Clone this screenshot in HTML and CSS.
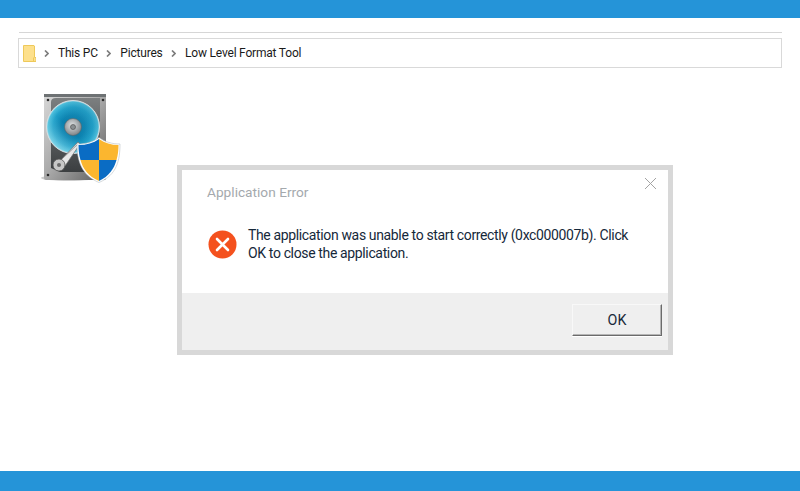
FILE: index.html
```html
<!DOCTYPE html>
<html lang="en">
<head>
<meta charset="utf-8">
<title>Application Error</title>
<link rel="stylesheet" href="styles.css">
</head>
<body>
<div class="page">
  <header class="bar bar-top"></header>
  <main class="explorer">
    <div class="rule"></div>
    <nav class="address">
      <svg class="folder" width="13" height="17" viewBox="0 0 13 17">
        <path d="M.5.5h10.500l.5.5v11.500h1.500v4H.5z" fill="#fde08c" stroke="#eec95a"/>
        <path d="M10.500 12.500v4" stroke="#eec95a"/>
      </svg>
      <svg class="chev" width="5" height="7" viewBox="0 0 5 7"><path d="M1 .5l3 3-3 3" fill="none" stroke="#7d7d7d" stroke-width="1.700"/></svg>
      <span class="crumb">This PC</span>
      <svg class="chev" width="5" height="7" viewBox="0 0 5 7"><path d="M1 .5l3 3-3 3" fill="none" stroke="#7d7d7d" stroke-width="1.700"/></svg>
      <span class="crumb">Pictures</span>
      <svg class="chev" width="5" height="7" viewBox="0 0 5 7"><path d="M1 .5l3 3-3 3" fill="none" stroke="#7d7d7d" stroke-width="1.700"/></svg>
      <span class="crumb">Low Level Format Tool</span>
    </nav>
    <svg class="app-icon" width="80" height="90" viewBox="0 0 80 90">
      <defs>
        <linearGradient id="case" x1="0" y1="0" x2="1" y2="1">
          <stop offset="0" stop-color="#d8d8d8"/><stop offset=".5" stop-color="#a8a8a8"/><stop offset="1" stop-color="#5a5a5a"/>
        </linearGradient>
        <radialGradient id="platter" cx=".5" cy=".5" r=".5">
          <stop offset="0" stop-color="#06709c"/><stop offset=".45" stop-color="#0b82b0"/><stop offset=".75" stop-color="#1f9fc8"/><stop offset=".94" stop-color="#4dbfdc"/><stop offset="1" stop-color="#c3ecf4"/>
        </radialGradient>
        <linearGradient id="sheen" x1="0" y1="1" x2="1" y2="0">
          <stop offset="0" stop-color="#c8f2f8" stop-opacity=".75"/><stop offset=".45" stop-color="#5cc4de" stop-opacity="0"/><stop offset="1" stop-color="#045f88" stop-opacity=".35"/>
        </linearGradient>
        <radialGradient id="hub" cx=".45" cy=".4" r=".7">
          <stop offset="0" stop-color="#dfe2e3"/><stop offset="1" stop-color="#6e7478"/>
        </radialGradient>
        <linearGradient id="bay" x1="0" y1="0" x2="0" y2="1">
          <stop offset="0" stop-color="#7c7f80"/><stop offset="1" stop-color="#3b3e40"/>
        </linearGradient>
      </defs>
      <ellipse cx="28" cy="84" rx="28" ry="3" fill="#000" opacity=".2"/>
      <rect x="3" y="0" width="62" height="86" rx="2" fill="url(#case)"/>
      <rect x="3" y="0" width="62" height="3" fill="#6e7274"/>
      <path d="M10 8q0-4 5-4h44v74H19l-9-4z" fill="url(#bay)"/>
      <circle cx="32" cy="33" r="26.500" fill="url(#platter)" stroke="#d7dde0" stroke-width="1"/>
      <circle cx="32" cy="33" r="26" fill="url(#sheen)"/>
      <circle cx="32" cy="33" r="8.500" fill="url(#hub)" stroke="#59646a" stroke-width=".6"/>
      <circle cx="32" cy="33" r="2.500" fill="#8a8f92" stroke="#555" stroke-width=".7"/>
      <path d="M18 68l19-20 2 2-15 22z" fill="#e8e8e8" stroke="#6f6f6f" stroke-width=".7"/>
      <path d="M22 64l14-13" stroke="#888" stroke-width=".7"/>
      <circle cx="18" cy="71" r="6" fill="#c7c7c7" stroke="#555" stroke-width=".8"/>
      <circle cx="18" cy="71" r="2" fill="#6a6a6a"/>
      <circle cx="7" cy="6" r="1.300" fill="#2c2c2c"/><circle cx="62" cy="6" r="1.300" fill="#2c2c2c"/>
      <circle cx="7" cy="81" r="1.300" fill="#2c2c2c"/><circle cx="62" cy="81" r="1.300" fill="#2c2c2c"/>
      <path d="M36 50c9 0 16-2 22-6.500 6 4.500 13 6.500 21 6.500 0 16-3 31-21 38.500C40 81 36 66 36 50z" fill="#fff" stroke="#aab2b9" stroke-width=".5"/>
      <path d="M37.500 51c8 0 15-2 20.500-6v21H39.500C38 61 37.500 56 37.500 51z" fill="#0a6cc4"/>
      <path d="M58 45c6 4 12 6 19.500 6 0 5-.5 10-2 15H58z" fill="#fbb62f"/>
      <path d="M39.500 66H58v21C47 82 42 75 39.500 66z" fill="#fbb62f"/>
      <path d="M58 66h17.500c-2.500 9-7.500 16-17.500 21z" fill="#0a6cc4"/>
    </svg>
    <section class="dialog">
      <div class="dialog-body">
        <div class="dialog-title">Application Error</div>
        <svg class="close" width="13" height="13" viewBox="0 0 13 13"><path d="M1 1l11 11M12 1L1 12" stroke="#a3a3a3" fill="none"/></svg>
        <div class="message">
          <svg class="error" width="29" height="29" viewBox="0 0 29 29">
            <circle cx="14.500" cy="14.500" r="14" fill="#f4511e"/>
            <path d="M9 9l11 11M20 9L9 20" stroke="#fff" stroke-width="2.600" stroke-linecap="round"/>
          </svg>
          <p class="message-text">The application was unable to start correctly (0xc000007b). Click OK to close the application.</p>
        </div>
      </div>
      <div class="dialog-footer">
        <button class="ok" type="button">OK</button>
      </div>
    </section>
  </main>
  <footer class="bar bar-bottom"></footer>
</div>
</body>
</html>
```
FILE: styles.css
```css
* { box-sizing: border-box; }
html, body { margin: 0; height: 100%; }
body { background: #fff; font-family: Roboto, "Noto Sans", sans-serif; overflow: hidden; }
.page { height: 491px; display: flex; flex-direction: column; }
.bar { background: #2594d8; flex: none; }
.bar-top { height: 18px; }
.bar-bottom { height: 20px; }
.explorer { flex: 1; position: relative; padding: 14px 18px 0 18px; }
.rule { height: 1px; margin-left: 1px; background: #d6d6d6; }
.address { height: 30px; margin-top: 5px; border: 1px solid #d9d9d9; display: flex; align-items: center; padding-left: 4px; font-size: 12px; letter-spacing: -.2px; color: #1a1a1a; }
.folder { flex: none; margin-right: 8px; }
.chev { flex: none; margin-right: 9px; }
.crumb { margin-right: 8.500px; white-space: nowrap; }
.app-icon { display: block; margin: 26px 0 0 23px; }
.dialog { position: absolute; left: 177px; top: 147px; width: 496px; height: 190px; border: 5px solid #d8d8d8; display: flex; flex-direction: column; background: #fff; }
.dialog-body { height: 123px; position: relative; padding: 13px 25px 0; }
.dialog-title { font-size: 13.700px; color: #a4a9ad; line-height: 18px; }
.close { position: absolute; top: 7px; right: 11px; }
.message { display: flex; align-items: center; margin-top: 25px; gap: 11px; }
.error { flex: none; margin-left: 1px; }
.message-text { margin: 0; width: 395px; font-size: 14px; letter-spacing: -.36px; line-height: 18px; color: #15283a; }
.dialog-footer { flex: 1; background: #efefef; display: flex; justify-content: flex-end; padding: 11px 6px 0 0; }
.ok { width: 90px; height: 32px; background: #efefef; font: inherit; font-size: 14.300px; color: #1a2a3a; border: 1px solid; border-color: #f8f8f8 #6b6b6b #6b6b6b #f8f8f8; box-shadow: inset -1px -1px 0 #b5b5b5, 0 1px 0 #fff; padding: 0; }
```
